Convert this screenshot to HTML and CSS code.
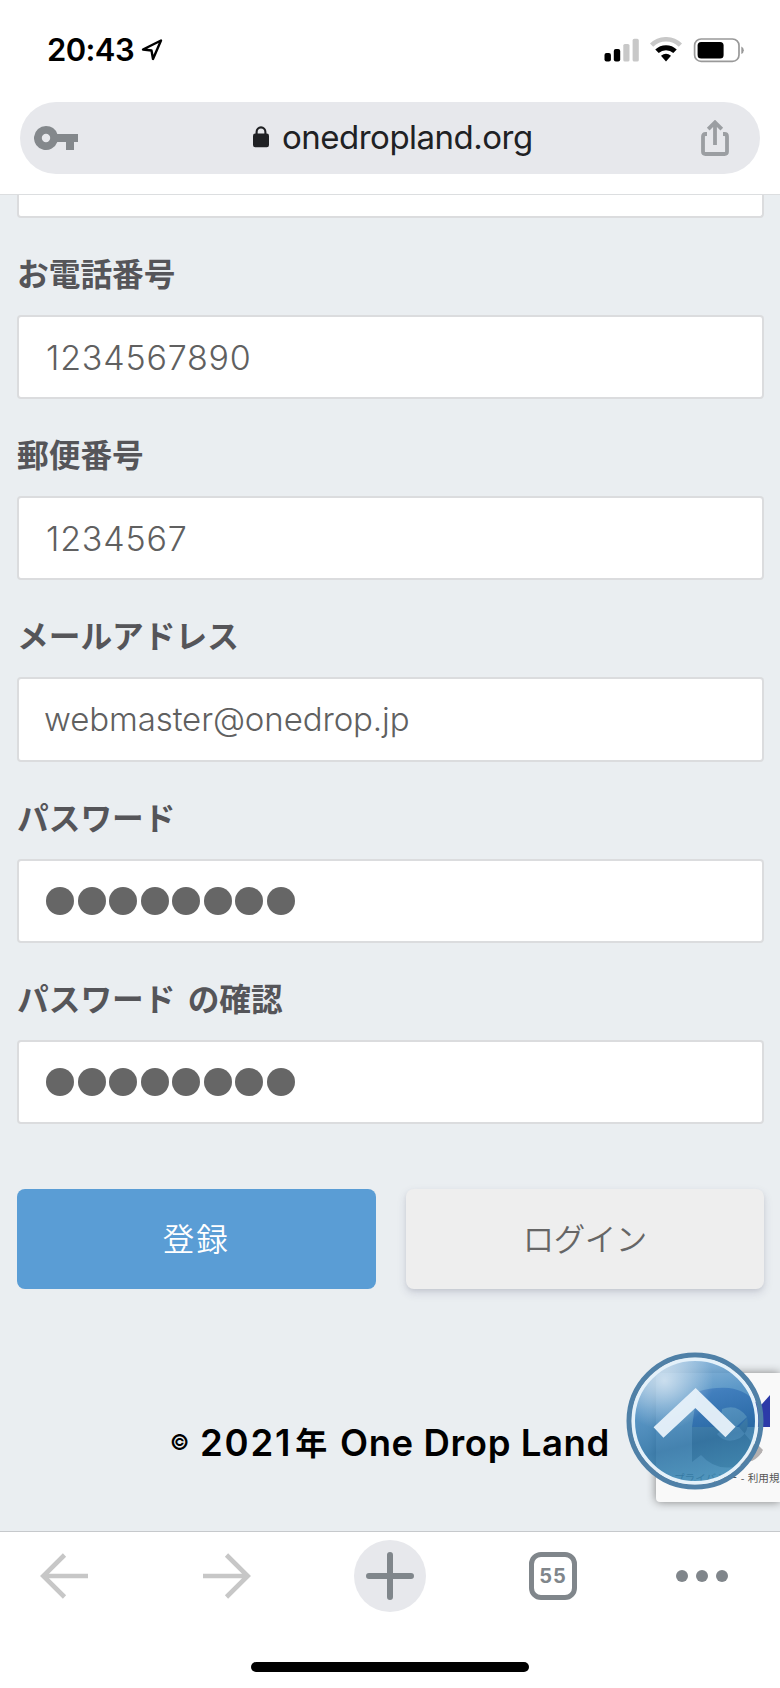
FILE: index.html
```html
<!DOCTYPE html>
<html lang="ja">
<head>
    <title>One Drop Land</title>
    <meta charset="UTF-8">
    <link rel="stylesheet" href="styles.css">
</head>
<body>

<header>
    <div class="status-bar">
        <span class="time">20:43</span>
        <svg class="location" width="22" height="24" viewBox="0 0 22 24">
            <path d="M2 11.5L20 2.5L12 21L10.5 12.5Z" fill="none" stroke="#000" stroke-width="2.4" stroke-linejoin="round"/>
        </svg>
        <svg class="status-icons" width="140" height="26" viewBox="0 0 140 26">
            <rect x="0.5" y="16" width="6.4" height="8.6" rx="2"/>
            <rect x="9.8" y="12" width="6.4" height="12.6" rx="2"/>
            <rect x="19.3" y="7" width="6.2" height="17.6" rx="1.6" fill="#c8c8c8"/>
            <rect x="28.6" y="1.8" width="6.2" height="22.8" rx="1.6" fill="#c8c8c8"/>
            <path d="M47.6 8.2A20.5 20.5 0 0 1 76.4 8.2" fill="none" stroke="#c8c8c8" stroke-width="4.6"/>
            <path d="M53 14.3A13 13 0 0 1 71 14.3" fill="none" stroke="#000" stroke-width="5"/>
            <path d="M57 18.8Q62 14.9 67 18.8L62 24.4Z"/>
            <rect x="90.6" y="2" width="44.4" height="22.4" rx="6.5" fill="#fff" stroke="#999" stroke-width="1.7"/>
            <rect x="93.6" y="5" width="26" height="16.4" rx="3.5"/>
            <path d="M137.3 9.5Q139.8 10.5 139.8 13.2Q139.8 15.9 137.3 16.9Z" fill="#999"/>
        </svg>
    </div>
    <div class="url-bar">
        <svg class="key" width="46" height="26" viewBox="0 0 46 26">
            <path fill="#84888c" fill-rule="evenodd" d="M12 1A12 12 0 1 0 23.3 17H32V25H40V17H44V9H23.3A12 12 0 0 0 12 1ZM12 8.8A4.2 4.2 0 1 1 12 17.2A4.2 4.2 0 1 1 12 8.8Z"/>
        </svg>
        <div class="address">
            <svg width="16" height="22" viewBox="0 0 16 22">
                <path d="M3.6 9V6A4.4 4.6 0 0 1 12.4 6V9" fill="none" stroke="#202124" stroke-width="2.1"/>
                <rect x="0" y="7.5" width="16" height="13.7" rx="2.2" fill="#202124"/>
            </svg>
            <span>onedropland.org</span>
        </div>
        <svg class="share" width="28" height="36" viewBox="0 0 28 36">
            <path d="M6 14H4.5Q2 14 2 16.5V31.5Q2 34 4.5 34H23.5Q26 34 26 31.5V16.5Q26 14 23.5 14H22M14 25V3M7.2 9.2L14 2.4L20.8 9.2" fill="none" stroke="#9b9ea2" stroke-width="3.8"/>
        </svg>
    </div>
</header>

<main>
    <div class="field field-cut"></div>

    <form>
        <label>お電話番号</label>
        <div class="field"><span class="digits">1234567890</span></div>

        <label>郵便番号</label>
        <div class="field"><span class="digits">1234567</span></div>

        <label>メールアドレス</label>
        <div class="field"><span class="mail">webmaster@onedrop.jp</span></div>

        <label>パスワード</label>
        <div class="field dots"><i></i><i></i><i></i><i></i><i></i><i></i><i></i><i></i></div>

        <label>パスワード の確認</label>
        <div class="field dots"><i></i><i></i><i></i><i></i><i></i><i></i><i></i><i></i></div>

        <div class="buttons">
            <button type="button" class="button primary">登録</button>
            <button type="button" class="button login">ログイン</button>
        </div>
    </form>

    <footer>
        <span class="copy">©</span>
        <span class="year">2021<b>年</b></span>
        <span class="name">One Drop Land</span>
    </footer>

    <div class="recaptcha">
        <svg width="124" height="129" viewBox="0 0 124 129">
            <path d="M41 19Q56 14 73 15Q91 17 103 33L106 31L114 22V54H80L91 44Q81 30 66 36L64 54H36Z" fill="#2c3aa8"/>
            <path d="M36 54V89L45 82Q58 97 77 94Q96 91 106 79L94 67L83 54L91 45Q94 58 84 65Q70 72 61 61L70 54Z" fill="#8c8c8c"/>
            <path d="M96 88Q104 84 107 77L101 71L88 84Z" fill="#b4b0b0"/>
        </svg>
        <div class="terms">プライバシー - 利用規</div>
    </div>

    <a class="page-top" href="#">
        <svg width="138" height="138" viewBox="0 0 138 138">
            <defs>
                <linearGradient id="ball" x1="0.25" y1="0" x2="0.5" y2="1">
                    <stop offset="0" stop-color="#86b4da"/>
                    <stop offset="0.35" stop-color="#4489c0"/>
                    <stop offset="0.7" stop-color="#276fa3"/>
                    <stop offset="1" stop-color="#3585b3"/>
                </linearGradient>
                <radialGradient id="shine" cx="0.25" cy="0.17" r="0.4">
                    <stop offset="0" stop-color="#fff" stop-opacity="0.6"/>
                    <stop offset="1" stop-color="#fff" stop-opacity="0"/>
                </radialGradient>
            </defs>
            <circle cx="69" cy="69" r="61" fill="url(#ball)" opacity="0.86"/>
            <circle cx="69" cy="69" r="61" fill="url(#shine)"/>
            <circle cx="69" cy="69" r="66" fill="none" stroke="#4f80a7" stroke-width="5"/>
            <circle cx="69" cy="69" r="61.6" fill="none" stroke="#e4f1fa" stroke-width="3.2"/>
            <path d="M32.5 80.5L69.5 46L104.5 80" fill="none" stroke="#e6f0f9" stroke-width="14.5" opacity="0.96"/>
        </svg>
    </a>
</main>

<nav>
    <div class="toolbar">
        <svg class="back" width="48" height="46" viewBox="0 0 48 46">
            <path d="M48 23H4M24.5 2L3.3 23L24.5 44" fill="none" stroke="#c7c7c7" stroke-width="4.6"/>
        </svg>
        <svg class="forward" width="48" height="46" viewBox="0 0 48 46">
            <path d="M0 23H44M23.5 2L44.7 23L23.5 44" fill="none" stroke="#c7c7c7" stroke-width="4.6"/>
        </svg>
        <div class="new-tab">
            <svg width="48" height="48" viewBox="0 0 48 48">
                <path d="M24 3V45M3 24H45" stroke="#80868b" stroke-width="6" stroke-linecap="round"/>
            </svg>
        </div>
        <div class="tabs">55</div>
        <svg width="52" height="12" viewBox="0 0 52 12">
            <circle cx="6" cy="6" r="6" fill="#80868b"/>
            <circle cx="26" cy="6" r="6" fill="#80868b"/>
            <circle cx="46" cy="6" r="6" fill="#80868b"/>
        </svg>
    </div>
    <div class="home-bar"></div>
</nav>

</body>
</html>
```
FILE: styles.css
```css
* {
    box-sizing: border-box;
}

body {
    font-family: Inter, "Noto Sans CJK JP", sans-serif;
    margin: 0;
    width: 780px;
    height: 1688px;
    background: white;
    overflow: hidden;
}

svg {
    display: block;
    flex: none;
}

header {
    height: 195px;
    padding: 0 20px;
    border-bottom: 1px solid #dcdee0;
}

.status-bar {
    height: 102px;
    display: flex;
    align-items: center;
    padding: 0 16px 3px 27px;
}

.time {
    font-size: 31px;
    font-weight: 600;
    letter-spacing: -0.6px;
    width: 94px;
    white-space: nowrap;
}

.status-icons {
    margin-left: auto;
}

.url-bar {
    height: 72px;
    border-radius: 36px;
    background: #e7e8ec;
    display: flex;
    align-items: center;
    justify-content: space-between;
    padding: 0 31px 0 14px;
}

.address {
    display: flex;
    align-items: center;
    gap: 13px;
    color: #202124;
    font-size: 33px;
    letter-spacing: -0.5px;
    white-space: nowrap;
    padding: 0 2px 2px 0;
}

.address span {
    width: 244px;
}

main {
    position: relative;
    height: 1336px;
    padding: 0 16px 0 17px;
    background: #eaeef1;
    overflow: hidden;
}

label {
    display: block;
    height: 97px;
    padding-top: 35px;
    font-family: "Noto Sans CJK JP", sans-serif;
    font-size: 31.7px;
    line-height: 38px;
    font-weight: 600;
    word-spacing: 5px;
    color: #555559;
    white-space: nowrap;
}

.field {
    height: 84.2px;
    display: flex;
    align-items: center;
    padding-left: 27px;
    background: white;
    border: 2px solid #dbdcde;
    border-radius: 4px;
    font-size: 34px;
    font-weight: 300;
    color: #606060;
    white-space: nowrap;
}

.field-cut {
    height: 23px;
    border-top: none;
    border-radius: 0 0 4px 4px;
}

.digits {
    letter-spacing: 0.8px;
}

.mail {
    font-size: 33px;
    letter-spacing: -0.1px;
    margin-left: -2px;
}

.dots {
    gap: 3.5px;
}

.dots i {
    width: 28px;
    height: 28px;
    border-radius: 50%;
    background: #666;
}

.buttons {
    display: flex;
    gap: 30px;
    margin-top: 65px;
}

.button {
    flex: 1;
    height: 100px;
    border: none;
    border-radius: 8px;
    font-family: "Noto Sans CJK JP", sans-serif;
    font-size: 31.5px;
    font-weight: 350;
    letter-spacing: 2px;
    padding: 0 0 4px;
}

.primary {
    background: #5a9dd5;
    color: white;
}

.login {
    background: #eee;
    color: #666;
    letter-spacing: -0.5px;
    box-shadow: 0 4px 10px rgba(50, 50, 93, 0.15), 0 2px 4px rgba(0, 0, 0, 0.06);
}

footer {
    display: flex;
    align-items: center;
    margin-top: 129px;
    padding-left: 153px;
    height: 50px;
    font-size: 36.5px;
    font-weight: 600;
    white-space: nowrap;
}

.copy {
    width: 30px;
    font-size: 21px;
}

.year {
    width: 140px;
    display: flex;
    align-items: center;
    letter-spacing: 1.8px;
}

.year b {
    font-family: "Noto Sans CJK JP", sans-serif;
    font-size: 32px;
    line-height: 36px;
    font-weight: 600;
    margin: 0 0 4px 3px;
}

.name {
    letter-spacing: 0.6px;
}

/* badge and scroll button float over the page */
.recaptcha {
    position: absolute;
    right: 0;
    bottom: 29px;
    width: 124px;
    height: 129px;
    background: #f9f9f9;
    border-radius: 4px 0 0 4px;
    box-shadow: 0 0 10px #808080;
}

.terms {
    position: absolute;
    left: 18px;
    top: 97px;
    font-size: 10.6px;
    font-family: "Noto Sans CJK JP", sans-serif;
    word-spacing: 1px;
    color: #555;
    white-space: nowrap;
}

.page-top {
    position: absolute;
    right: 16px;
    bottom: 41px;
}

nav {
    height: 157px;
    border-top: 1px solid #c6c9cc;
    display: flex;
    flex-direction: column;
    align-items: center;
}

.toolbar {
    align-self: stretch;
    display: flex;
    align-items: center;
    gap: 103px;
    height: 88px;
    padding-left: 40px;
}

.back {
    margin-right: 12px;
}

.new-tab {
    width: 72px;
    height: 72px;
    border-radius: 50%;
    background: #e7e8ec;
    display: flex;
    align-items: center;
    justify-content: center;
}

.tabs {
    width: 48px;
    height: 48px;
    margin-right: -4px;
    border: 5px solid #80868b;
    border-radius: 12px;
    display: flex;
    align-items: center;
    justify-content: center;
    color: #80868b;
    font-size: 20px;
    font-weight: 700;
    letter-spacing: 1px;
}

.home-bar {
    width: 278px;
    height: 10px;
    margin-top: 42px;
    border-radius: 5px;
    background: black;
}
```
